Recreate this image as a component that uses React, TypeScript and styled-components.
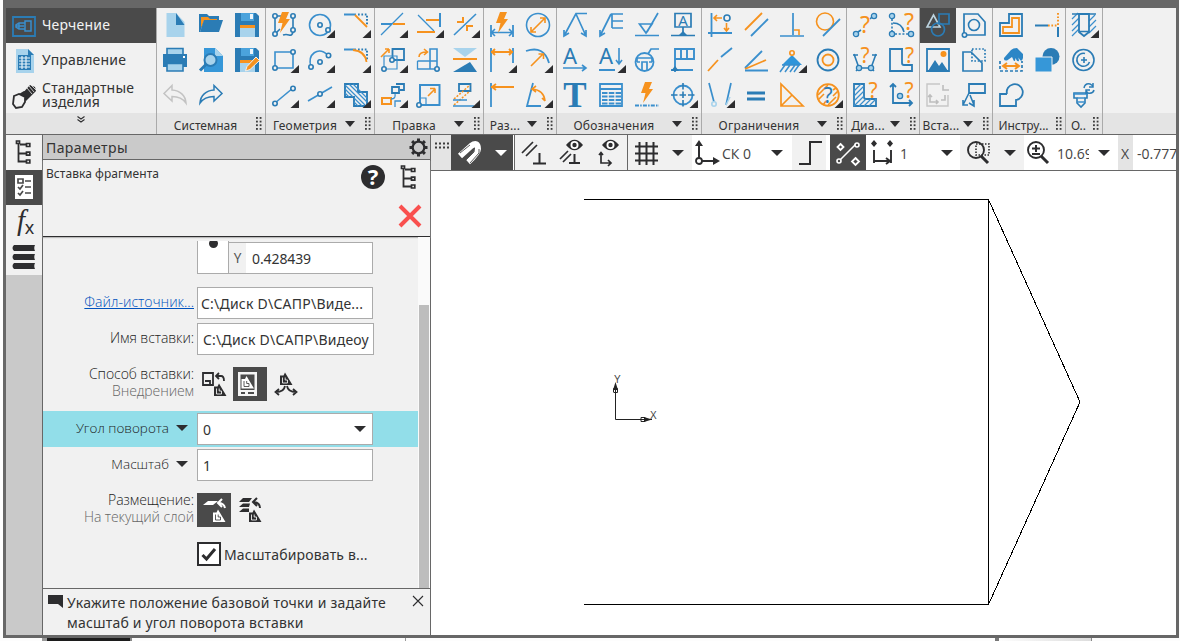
import React, { ReactNode } from "react";
import styled, { createGlobalStyle, css } from "styled-components";

const D = "#2b7cb5";
const B = "#3a8fcd";
const L = "#a8d3ec";
const O = "#f6921e";
const K = "#2d2d2f";
const frame = "#676767";
const pale = "#f1f1f1";
const dark = "#4a4a4a";

const Global = createGlobalStyle`
  * { box-sizing: border-box; }
  html, body, #root { margin: 0; padding: 0; }
  body {
    width: 1180px; height: 641px; overflow: hidden; background: #fdfdfd;
    font-family: "Noto Sans", "Open Sans", sans-serif; color: #333;
  }
`;

/* ---------- shell ---------- */
const Page = styled.div`
  width: 1180px; height: 641px; padding-left: 3px; overflow: hidden;
`;
const Window = styled.div`
  width: 1176px; height: 638px; display: flex; flex-direction: column;
  border: solid ${frame}; border-width: 8px 3px 3px 3px; background: #fff;
`;
const Behind = styled.div`
  height: 3px; display: flex; padding-left: 39px;
`;
const BehindBlock = styled.div<{ $w: number; $bg: string }>`
  width: ${(p) => p.$w}px; height: 3px; background: ${(p) => p.$bg};
`;

/* ---------- ribbon ---------- */
const Ribbon = styled.div`
  height: 127px; flex: none; display: flex; background: ${pale};
  border-bottom: 1px solid ${frame};
`;
const Modes = styled.div`
  width: 151px; display: flex; flex-direction: column; border-right: 1px solid #aaa;
`;
const Mode = styled.div<{ $active?: boolean }>`
  height: 35px; display: flex; align-items: center; gap: 6px; padding-left: 6px;
  font-size: 14px; line-height: 14px; letter-spacing: 0.2px;
  ${(p) => p.$active && css`background: ${dark}; color: #f3f3f3;`}
`;
const ModeName = styled.span`
  padding-bottom: 2px;
`;
const Footer = styled.div`
  height: 21px; display: flex; align-items: center; background: #e4e4e4;
`;
const ModesMore = styled(Footer)`
  justify-content: center; padding-bottom: 8px;
`;
const Group = styled.div<{ $cols: number }>`
  width: ${(p) => p.$cols * 36 + 1}px; flex: none; display: flex; flex-direction: column;
  border-right: 1px solid #aaa;
`;
const Cells = styled.div<{ $cols: number }>`
  display: grid; grid-template-columns: repeat(${(p) => p.$cols}, 36px); grid-auto-rows: 35px;
  height: 105px;
`;
const Cell = styled.div<{ $active?: boolean }>`
  padding: 5px 6px; background: ${(p) => (p.$active ? dark : "transparent")};
`;
const GroupName = styled.div<{ $wide: boolean }>`
  flex: 1; text-align: center; font-size: 12px; line-height: 16px; white-space: nowrap;
  overflow: hidden; padding: 4px 0 0 ${(p) => (p.$wide ? 0 : 3)}px;
  letter-spacing: ${(p) => (p.$wide ? 0.2 : 0)}px;
`;
const RibbonRest = styled.div`
  flex: 1; display: flex; flex-direction: column; justify-content: flex-end;
`;
const Glyph = styled.svg<{ $w?: number; $h?: number }>`
  width: ${(p) => p.$w ?? 24}px; height: ${(p) => p.$h ?? 24}px; display: block; flex: none;
  overflow: visible; fill: none; stroke-width: 1.6;
`;
const Caret = styled.i<{ $light?: boolean }>`
  width: 0; height: 0; flex: none;
  border: solid transparent; border-width: 6px 6px 0 6px;
  border-top-color: ${(p) => (p.$light ? "#fff" : K)};
`;
const FooterCaret = styled(Caret)`
  border-width: 6px 5.5px 0 5.5px; border-top-color: ${K}; margin: 0 5px 0 1px;
`;
const GroupDots = styled.i`
  width: 6px; height: 13px; flex: none; margin: 0 3px 0 5px;
  background-image: radial-gradient(circle at 1px 1px, #3c3c3c 1.1px, transparent 1.3px);
  background-size: 3.67px 3.67px;
`;

/* ---------- body ---------- */
const Body = styled.div`
  flex: 1; min-height: 0; display: flex;
`;
const Side = styled.div`
  width: 37px; flex: none; background: #c9c9c9; border-right: 1px solid ${frame};
`;
const SideTab = styled.div<{ $active?: boolean }>`
  height: 35px; padding: 5px 6px; background: ${(p) => (p.$active ? dark : pale)};
`;
const Panel = styled.div`
  width: 388px; flex: none; display: flex; flex-direction: column; background: ${pale};
  border-right: 1px solid ${frame};
`;
const PanelTitle = styled.div`
  height: 25px; display: flex; align-items: center; justify-content: space-between;
  padding: 0 2px 0 3px; background: #cacaca; border-bottom: 1px solid ${frame};
  font-size: 14px; letter-spacing: 0.4px;
`;
const PanelHead = styled.div`
  height: 77px; display: flex; justify-content: space-between; padding: 4px 9px 0 3px;
  font-size: 12px; border-bottom: 1px solid ${K}; box-shadow: 0 1px 1px #bbb;
  line-height: 19px; letter-spacing: 0.05px;
`;
const HeadTools = styled.div`
  display: grid; grid-template-columns: 24px 24px; gap: 15px 12px; height: 64px; padding-top: 1px;
  align-content: start;
`;
const Cross = styled.div`
  grid-column: 2;
`;
const Scroll = styled.div`
  flex: 1; min-height: 0; display: flex;
`;
const Rows = styled.div`
  flex: 1; display: flex; flex-direction: column; overflow: hidden;
`;
const Track = styled.div`
  width: 12px; background: #fafafa; padding: 68px 1px 0 1px;
`;
const Thumb = styled.div`
  height: 100%; background: #bdbdbd;
`;
const Row = styled.div<{ $h?: number; $on?: boolean }>`
  height: ${(p) => p.$h ?? 36}px; flex: none; display: flex; align-items: center; gap: 3px;
  background: ${(p) => (p.$on ? "#92dee9" : "transparent")};
`;
const Label = styled.div<{ $link?: boolean }>`
  width: 151px; flex: none; display: flex; flex-direction: column; align-items: flex-end;
  font-family: "Open Sans", "Noto Sans", sans-serif; font-weight: 300; font-size: 14px;
  line-height: 17px; color: #1c1c1c; padding-bottom: 4px; white-space: nowrap;
  letter-spacing: -0.08px;
  ${(p) => p.$link && css`color: #0052bd; text-decoration: underline; letter-spacing: 0;`}
`;
const Pick = styled.span`
  display: flex; align-items: center; gap: 7px; padding: 2px 6px 0 0; font-size: 13.5px;
  letter-spacing: 0;
`;
const Sub = styled.span`
  color: #666;
`;
const Field = styled.div<{ $w?: number; $pad?: number }>`
  width: ${(p) => p.$w ?? 176}px; height: 32px; display: flex; align-items: center;
  justify-content: space-between; padding: 0 6px 0 ${(p) => p.$pad ?? 5}px;
  background: #fff; border: 1px solid #ababab; font-size: 14px; white-space: nowrap;
  letter-spacing: 0.23px;
`;
const PointRow = styled.div`
  height: 48px; flex: none; padding: 4px 0 0 154px; display: flex; align-items: flex-start;
`;
const PointMark = styled.div`
  width: 32px; height: 33px; background: #fff; border: 1px solid #ababab; border-top: 0; overflow: hidden;
  display: flex; justify-content: center;
`;
const PointDot = styled.i`
  width: 9px; height: 9px; border-radius: 50%; background: ${K}; margin-top: -2px;
`;
const PointField = styled.div`
  width: 145px; height: 32px; margin: 1px 0 0 -1px; display: flex; border: 1px solid #ababab;
  background: #fff; font-size: 14px; line-height: 31px; letter-spacing: -0.1px;
`;
const Axis = styled.span`
  width: 17px; background: ${pale}; text-align: center; font-size: 13.5px; color: #555; margin-right: 6px;
`;
const Choices = styled.div`
  display: flex; gap: 2px;
`;
const Choice = styled.div<{ $active?: boolean }>`
  width: 34px; height: 34px; padding: 5px; background: ${(p) => (p.$active ? dark : "transparent")};
`;
const CheckRow = styled.div`
  height: 36px; padding: 0 0 2px 154px; display: flex; align-items: center; gap: 3px; font-size: 14px;
  letter-spacing: 0.17px;
`;
const Check = styled.div`
  width: 24px; height: 24px; border: 2px solid ${K}; background: #fff; padding: 2px;
`;
const Hint = styled.div`
  height: 47px; display: flex; border-top: 1px solid ${frame}; padding: 4px 6px 0 5px;
  font-size: 14px; line-height: 20px;
`;
const HintText = styled.div`
  flex: 1; padding-left: 4px; white-space: nowrap;
`;
const HintLine = styled.div<{ $track: number }>`
  letter-spacing: ${(p) => p.$track}px;
`;

const Work = styled.div`
  flex: 1; min-width: 0; display: flex; flex-direction: column;
`;
const Bar = styled.div`
  height: 36px; flex: none; display: flex; background: #fff; border-bottom: 1px solid ${frame};
  overflow: hidden;
`;
const Seg = styled.div<{ $w: number; $bg?: string; $line?: boolean; $pad?: number; $gap?: number }>`
  width: ${(p) => p.$w}px; flex: none; display: flex; align-items: center;
  padding-left: ${(p) => p.$pad ?? 0}px; gap: ${(p) => p.$gap ?? 0}px;
  background: ${(p) => p.$bg ?? "#fff"}; overflow: hidden;
  border-right: ${(p) => (p.$line ? `1px solid ${frame}` : "0")};
`;
const Value = styled.span<{ $w: number }>`
  width: ${(p) => p.$w}px; flex: none; overflow: hidden; white-space: nowrap; font-size: 14px;
  padding-top: 2px; color: #444; font-family: "Open Sans", "Noto Sans", sans-serif;
`;
const ZoomValue = styled(Value)`
  margin-right: 3px;
`;
const Drawing = styled.svg`
  width: 745px; height: 464px; display: block; background: #fff;
`;

/* ---------- icon drawings ---------- */
const Tri = () => <path d="M27 17V25H18.5Z" fill={K} />;
const Node = ({ x, y, c = D, r = 2.2 }: { x: number; y: number; c?: string; r?: number }) => (
  <circle cx={x} cy={y} r={r} fill={pale} stroke={c} />
);
const Ln = ({ d, c = B, w, dash }: { d: string; c?: string; w?: number; dash?: string }) => (
  <path d={d} stroke={c} strokeWidth={w} strokeDasharray={dash} />
);
type ChProps = { t: string; x: number; y: number; s: number; c: string; f?: string; b?: boolean; it?: boolean };
const Ch = ({ t, x, y, s, c, f = "Noto Sans", b, it }: ChProps) => (
  <text x={x} y={y} fontSize={s} fill={c} fontFamily={`"${f}", sans-serif`} fontWeight={b ? 700 : 400} fontStyle={it ? "italic" : "normal"} textAnchor="middle">{t}</text>
);
const Bolt = ({ x = 0, y = 0 }: { x?: number; y?: number }) => (
  <path transform={`translate(${x} ${y})`} d="M5 0H12L9 7H13L3 21L5.5 11H1Z" fill={O} />
);
const Floppy = () => (
  <>
    <path d="M0 0H21L24 3V24H0Z" fill={D} />
    <path d="M6 0H19V8H6Z" fill="#4ba3dc" />
    <path d="M15 1H18V6H15Z" fill="#eef6fb" />
    <path d="M5 12H20V15H5Z" fill={O} />
    <path d="M5 15H20V24H5Z" fill={L} />
  </>
);
const RedoShape = ({ c }: { c: string }) => (
  <Ln c={c} w={1.5} d="M15 2.5L23 10.5L15 18V13.5C9 13.5 4.5 15 1 20C1.5 12.5 7 7.5 15 7Z" />
);
const Tree = () => (
  <>
    <path d="M6.500 4V21.500H14M6.500 13.500H14M8 4.500H14" stroke={K} strokeWidth="1.800" />
    <path d="M4.500 1H7.500V3.500H4.500ZM14.500 3.500H17.800V6.500H14.500ZM14.500 12.200H17.800V15.200H14.500ZM14.500 20H17.800V23H14.500Z" fill={pale} stroke={K} strokeWidth="1.700" />
  </>
);
const Eye = () => (
  <>
    <path d="M0 6Q8.500 -4.500 17 6Q8.500 16.500 0 6Z" fill={K} />
    <circle cx="8.500" cy="6" r="4" fill="#fff" />
    <circle cx="8.500" cy="6" r="2.200" fill={K} />
  </>
);

const system: ReactNode[] = [
  <><path d="M3.500 0H13L21.500 9V24H3.500Z" fill={L} /><path d="M13 0L21.500 12H13Z" fill={D} /></>,
  <><path d="M0 1H8L10 3H20V8H5L1 19H0Z" fill={D} /><path d="M2 4H9L11 6H18V8H5L2 15Z" fill={O} /><path d="M5 7H24L20 19H1Z" fill={D} /></>,
  <Floppy />,
  <><path d="M4 0.500H20V7H4Z" fill={L} stroke={D} /><path d="M0 6H24V19H0Z" fill={D} /><path d="M20 8H22V10H20Z" fill="#fff" /><path d="M4 15.500H20V23H4Z" fill={L} stroke={D} /></>,
  <><path d="M5 0H16L24 8V24H5Z" fill="#3697d8" /><path d="M16 0V8H24Z" fill={L} /><circle cx="11.500" cy="12" r="6" fill={L} stroke={D} strokeWidth="2" /><path d="M7 16.500L1 22.500" stroke={D} strokeWidth="3" /></>,
  <><Floppy /><path d="M21 9L24.500 12.500L15 21.500L10.500 23L12 18.500Z" fill={O} stroke={pale} strokeWidth="1" /></>,
  <g transform="translate(24 0) scale(-1 1)"><RedoShape c="#c3c3c3" /></g>,
  <RedoShape c={D} />,
];

const geometry: ReactNode[] = [
  <><Ln c={D} d="M3 3V21M21 4V19Q20 23 17 22T11 22" /><Ln c={D} d="M3 3H9M3 21L8 16" /><Node x={3} y={3} /><Node x={3} y={21} /><Node x={21} y={3} /><Node x={21} y={17} /><Bolt x={5} y={-1} /></>,
  <><circle cx="12" cy="12" r="10.500" stroke={B} /><Node x={12} y={12} /><Node x={20} y={17} /><Tri /></>,
  <><Ln w={2} d="M0 1.500H12" /><Ln c={D} w={2} dash="1.700 1.700" d="M14 1.500H23V13" /><Ln c={O} w={1.800} d="M11 2L23 14" /><Tri /></>,
  <><Ln d="M3 4H21V20H3Z" /><Node x={21} y={4} /><Node x={3} y={20} /><Tri /></>,
  <><Ln d="M3 19C-1 6 10 -2 20 7" /><Node x={12} y={14} /><Node x={3} y={19} /><Node x={20.500} y={7.500} /><Tri /></>,
  <><Ln w={2} d="M0 1.500H12" /><Ln c={D} w={2} dash="1.700 1.700" d="M14 1.500H23V13" /><Ln c={O} w={1.800} d="M9 2Q21 3 22.500 14" /><Tri /></>,
  <><Ln d="M3 20L21 5" /><Node x={3} y={20.500} /><Node x={21} y={5.500} /><Tri /></>,
  <><Ln d="M0 18L24 4" /><Node x={12} y={11} /><Tri /></>,
  <><Ln c={D} d="M1 1H14V9H23V23H10V14H1Z" w={1.900} /><Ln w={1.200} d="M1 2L22 23M1 6L9 14M5 1L23 19M9 1L23 15M1 10L5 14M10 19L14 23M10 15L18 23" /><Tri /></>,
];

const edit: ReactNode[] = [
  <><Ln w={1.300} d="M0 22L22 0" /><Ln w={2} d="M0 11H11" /><Ln c={O} w={2} d="M12 11H24" /><Tri /></>,
  <><Ln w={1.300} d="M1 2L17 18" /><Ln w={2} d="M23 0V14" /><Ln c={O} w={2} d="M9 7H22M0 19H18" /><Tri /></>,
  <><Ln d="M1 22L23 1" /><Ln c={O} w={2} d="M4 9H10V4M14 18V13H20" /><Tri /></>,
  <><Ln c={D} w={1.800} d="M11.500 1H23V12H11.500Z" /><Ln d="M3 21V8H16V21Z" w={1.200} /><Node x={11} y={12} /><Node x={3} y={21} /><Ln c={O} d="M0 9L8 1M8 1H4M8 1V5" /><Tri /></>,
  <><Ln d="M13 21V1H20V21" /><Ln w={1.300} d="M0.500 13H20M0.500 13V21H18" /><Node x={20} y={21} /><Ln c={O} d="M2 9Q2 4 10 4M7 1L10.500 4L7 7" /></>,
  <><path d="M0 0H24L12 9Z" fill={L} /><path d="M0 24H24L17 14Z" fill={D} /><Ln c={O} w={2} d="M0 11H24" /></>,
  <><Ln c={D} d="M15 1H23V7H19M11 4H18V10H11Z" w={1.800} /><Ln c={O} w={2} d="M1 15H10V21H1Z" /><Ln w={1.300} d="M10 16Q15 16 14 11M14 24V18H20" /><Tri /></>,
  <><Ln w={2} d="M3 2H22.500V22H3Z" /><Ln w={1.200} d="M3 15H9V22" /><Node x={2} y={22} /><Ln c={O} d="M11 13L18 6M18 5.500H13M18 5.500V10" /></>,
  <><Ln c={D} d="M6 1H17.500V8H6Z" w={1.800} /><Ln c={O} w={1.500} dash="2 1.500" d="M1 16L17 2M1 22L17 8" /><Ln w={1.400} d="M0 17H14M0 23H21" /><Tri /></>,
];

const dims: ReactNode[] = [
  <><Ln w={1.800} d="M1 12V24M23 12V24" /><Ln d="M1 19.500H23M5 16L1.500 19.500L5 23M19 16L22.500 19.500L19 23" /><Bolt x={5} y={-1} /></>,
  <><circle cx="12" cy="12" r="11.500" stroke={B} /><Ln c={O} d="M5 19L19 5M5 14V19H10M14 5H19V10" /></>,
  <><Ln w={1.800} d="M1 0V24M23 0V15" /><Ln c={O} w={1.800} d="M1 4H23M5 1L2 4L5 7M19 1L22 4L19 7" /><Tri /></>,
  <><Ln w={1.800} d="M0 3Q18 -3 23 15" /><Ln c={O} d="M5 18L17 6M12.500 6H17.500V11" /><Tri /></>,
  <><Ln w={1.800} d="M1 0V24" /><Ln c={O} w={1.800} d="M1 4H24M6 1L2 4L6 7" /></>,
  <><Ln w={1.800} d="M7 0L1 23H15" /><Ln c={O} d="M6 6Q18 7 19 18M10 3L6 6L10 9M16 15L19 18" /><Tri /></>,
];

const marks: ReactNode[] = [
  <><Ln w={1.700} d="M24 0.500H13L1 23M1 17V23L6 20M13 1L23 23M23 17V23L18 20" /></>,
  <><Ln w={1.700} d="M12 1H24M12 1L1 23M1 17V23L6 20M13 1V15M13 8H24M13 15H24" /></>,
  <><Ln w={1.700} d="M4.500 11H17L11 20ZM12 19L23 0M0 22.500H24" /></>,
  <><Ln w={1.700} c={D} d="M4 0.500H20V14H4ZM12 14V19M0 22.500H24" /><path d="M7 23L12 18L17 23Z" fill={D} /><Ch t="A" x={12} y={12.500} s={15} c={D} /></>,
  <><Ch t="A" x={7} y={15.500} s={22} c={D} /><Ln d="M0 20H23M19 17L23 20L19 23" /></>,
  <><Ch t="A" x={7} y={15.500} s={22} c={D} /><Ln d="M20 0V16M17 12L20 16L23 12" /><Ln w={2} d="M0 22H16" /><Tri /></>,
  <><circle cx="9.500" cy="14" r="9" stroke={B} strokeWidth="1.800" /><Ln w={1.700} d="M2 14V10H17V14M7 22V14H12V22M2 14H5M14 14H17M13 6L16 1H24" /></>,
  <><Ln w={1.900} d="M4 24V1H23V11H4M10 1V11M16 1V11M0 22H22" /><path d="M0 23L4 18L8 23Z" fill={D} /></>,
  <Ch t="T" x={12} y={23.500} s={35} c={D} f="Liberation Serif" b />,
  <><Ln w={1.800} d="M1 1H23V23H1ZM1 6H23" /><Ln w={1.800} dash="5.500 1.300" d="M3 10H22M3 13.500H22M3 17H22M3 20.500H22" /></>,
  <><Bolt x={5} y={-1} /><Ln dash="4 1.200 1.500 1.200" d="M0 22.500H24" w={1.900} /></>,
  <><circle cx="12" cy="12" r="9.500" stroke={B} strokeWidth="1.800" /><Ln c={D} dash="6.500 2" d="M0 12H24M12 0V24" /><Tri /></>,
];

const limits: ReactNode[] = [
  <><Ln w={1.800} d="M3.500 0V24M0 20H24" /><Node x={19} y={5} r={3} /><Ln c={O} d="M14 5H6M9 2L6 5L9 8M18.500 10V18M16 15L18.500 18L21 15" /></>,
  <><Ln c={O} w={1.800} d="M1 17L18 0" /><Ln w={1.800} d="M7 23L24 6" /></>,
  <><Ln w={1.700} d="M13 0V22M0 23H24" /><Ln c={O} d="M14 17H19V22" /></>,
  <><circle cx="9" cy="8.500" r="8.500" stroke={O} /><Ln w={1.800} d="M7 23L24 6" /></>,
  <><Ln c={O} w={1.800} d="M0 23L10 12" /><Ln w={1.800} d="M13 9L24 0" /></>,
  <><Ln w={1.800} d="M1 20L18 3" /><Ln c={O} w={1.800} d="M1 21L22 12" /><Ln c={B} w={2} d="M1 22.500H24" /></>,
  <><path d="M12 7L22 17H2Z" fill="#2f95da" /><circle cx="12" cy="5" r="2.200" stroke={O} fill={pale} /><Ln w={1.500} d="M0 24L5 17M5 24L10 17M10 24L15 17M14 24L19 17M2 17H20" /><Tri /></>,
  <><circle cx="12" cy="12" r="10.500" stroke={D} strokeWidth="1.800" /><circle cx="12" cy="12" r="5.500" stroke={O} strokeWidth="1.800" /></>,
  <><Ln w={1.700} d="M1 0L6 19M23 0L18 22" /><Node x={6} y={21} c={L} /><Ln c={L} d="M18 22L22 14" /><Tri /></>,
  <Ln c={D} w={3} d="M3 10H21M3 16H21" />,
  <Ln c={O} w={1.700} d="M1 1V23H23ZM1 23L12 12" />,
  <><circle cx="12" cy="12" r="10.800" stroke={O} strokeWidth="1.800" /><Ln c={O} d="M2 12L12 2M2 17L8 11M7 22L10 18M17 7L20 5M17 13L22 8M12 22L20 14" /><Ch t="?" x={12} y={19.500} s={21} c={D} /><Tri /></>,
];

const Ball = ({ x, y }: { x: number; y: number }) => <circle cx={x} cy={y} r="2.600" fill={L} stroke={D} strokeWidth="1.300" />;
const diag: ReactNode[] = [
  <><Ball x={3} y={21} /><Ball x={21} y={3} /><Ln c={D} d="M5 19L8 17M17 6L19 4" /><Ch t="?" x={12} y={20} s={23} c={O} /></>,
  <><Ball x={3} y={3} /><Ball x={3} y={21} /><Ball x={22} y={21} /><Ln c={D} dash="2 1.700" d="M3 6V18M6 21H19" /><Ln c={D} d="M4 10Q13 10 15 19" /><Ch t="?" x={20} y={16.500} s={23} c={O} /></>,
  <><Ln c={D} d="M1 6L6 20H18L23 6M0 7H5M19 7H24M3 23L7 19M21 23L17 19" /><Ball x={6} y={20} /><Ball x={18} y={20} /><Ch t="?" x={12} y={15} s={21} c={O} /></>,
  <><Ln c={D} w={1.800} d="M14 1H1V23H23V17H15Q13 17 13 15V1" /><Ch t="?" x={20.500} y={14.500} s={21} c={O} /></>,
  <><Ln c={D} w={1.800} d="M1 1H11V14Q11 16 13 16H23V23H1Z" /><Ln w={1.200} d="M1 8L8 1M1 13L11 3M1 18L11 8M1 23L11 13M6 23L13 16M11 23L18 16M16 23L23 16" /><Ch t="?" x={20} y={14.500} s={21} c={O} /></>,
  <><Ln c={D} w={1.800} d="M4 1V20H23M1 4L4 1L7 4M20 17L23 20L20 23" /><Ball x={11} y={13} /><Ch t="?" x={20} y={14.500} s={21} c={O} /></>,
];

const insert: ReactNode[] = [
  <><Ln c="#bcd3df" w={1.600} d="M7.500 2L14 14H1Z" /><Ln c={D} w={1.700} d="M13 1H23V11H13Z" /><circle cx="12" cy="16.500" r="6.500" stroke={D} strokeWidth="1.700" /></>,
  <><Ln c={D} w={1.700} d="M2 22V1H16L23 9V22H5" /><circle cx="12" cy="12" r="5.500" stroke={D} /><Node x={2.500} y={22} /></>,
  <><Ln c={D} w={1.800} d="M1 1H23V23H1Z" /><path d="M2 23L9 12L13 18L16 14L22 23Z" fill={D} /><circle cx="17.500" cy="6" r="3" fill={O} /></>,
  <><Ln c={D} w={1.700} d="M9 4H1V23H20V15L9 4" /><Ln c={D} w={1.700} dash="1.700 1.700" d="M10 1H23V13H10Z" /></>,
  <><Ln c="#c6c6c6" w={1.400} d="M14 1H1V23H22V12" /><Ln c="#bdbdbd" d="M4 12V19H12M2 14L4 12L6 14M10 17L12 19L10 21M19 12V17H15M17 2V7H23" /></>,
  <><Ln c={D} w={1.800} d="M7 1H23V10H7Z" /><Ln c={D} d="M7 10L1 22M1 17V22H6M8 12L12 22M7 20L12 23V17" /></>,
];

const tools: ReactNode[] = [
  <><Ln c={D} w={1.800} d="M10 1H23V23H1V10H10Z" /><Ln c={O} w={1.800} d="M13 5H20V20H4V14H13Z" /></>,
  <><Ln c={D} w={2} d="M0 12.500H13" /><Ln c={O} w={1.900} dash="1.700 1.700" d="M13 12.500H23M23 0V12" /><Ln c={D} w={2} d="M23 14V24" /></>,
  <><path d="M5 10L12 2Q14 0 18 0L24 6V10Q23 14 21 12L19.500 9.500L20 13Q18.500 14 17.500 12L16.500 10L16 13Q14.500 13.500 14 11L13 9L8 12.500Q4.500 13 5 10Z" fill="#2c86c6" /><Ln c={O} w={2} d="M4 18H20M8 15L4 18L8 21M16 15L20 18L16 21" /><Ln c={D} w={1.700} dash="3 2" d="M1 13V23H23V13" /></>,
  <><circle cx="16" cy="8.500" r="8.500" fill={D} /><path d="M0 9H17V24H0Z" fill="#3697d8" stroke={pale} strokeWidth="1" /></>,
  <><Ln c={D} w={1.800} d="M8 11H1V23H17V17A8 8 0 1 0 8 11" /></>,
];

const holes: ReactNode[] = [
  <><Ln w={1.200} d="M0 6L6 0M0 12L7 5M0 18L7 11M0 23L7 16M17 8L23 2M17 14L24 7M17 20L24 13" /><path d="M7 1H17V19L12 23L7 19Z" fill={pale} stroke={D} strokeWidth="1.800" /><Ln c={D} d="M7 18.500H17M0 1H24" /><Tri /></>,
  <><circle cx="11.500" cy="12" r="10.500" stroke={D} /><path d="M13 5.500A6.500 6.500 0 1 0 17.500 14" stroke={D} /><Ln c={D} d="M12 9V15M9 12H15" /></>,
  <><path d="M2 10H15V15H13V20L9 24L5 20V15H2Z" stroke={D} /><Ln c={B} d="M1 11H16M5 15H13M5 19H13" /><Ln c={D} d="M12 5Q13 0 18 1L21 3M21 0V4H17M22 7Q21 11 16 10L14 8M14 11V7H18" w={1.500} /></>,
];

const groups = [
  { name: "Системная", cols: 3, caret: false, icons: system },
  { name: "Геометрия", cols: 3, caret: true, icons: geometry },
  { name: "Правка", cols: 3, caret: true, icons: edit },
  { name: "Раз...", cols: 2, caret: true, icons: dims },
  { name: "Обозначения", cols: 4, caret: true, icons: marks },
  { name: "Ограничения", cols: 4, caret: true, icons: limits },
  { name: "Диа...", cols: 2, caret: true, icons: diag },
  { name: "Вста...", cols: 2, caret: true, icons: insert, active: 0 },
  { name: "Инстру...", cols: 2, caret: false, icons: tools },
  { name: "О..", cols: 1, caret: false, icons: holes },
];

/* A small assembly figure used by the insertion mode buttons */
const Part = ({ c, bg }: { c: string; bg: string }) => (
  <><path d="M0 3H3.500L5 0L12.500 12.500H0Z" fill={c} /><path d="M2.500 5V10.500H7.500V7.500H5.200V5" stroke={bg} strokeWidth="0.900" /></>
);

const Icon = ({ children, w, h }: { children: ReactNode; w?: number; h?: number }) => (
  <Glyph $w={w} $h={h} viewBox={`0 0 ${w ?? 24} ${h ?? 24}`}>{children}</Glyph>
);

function RibbonBar() {
  return (
    <Ribbon>
      <Modes>
        <Mode $active>
          <Icon><Ln c={D} w={1.800} d="M1 3H23V22H1Z" /><Ln c={B} w={1.500} d="M13 7H19V17H13ZM13 9H7L4 11V13L7 15H13M7 9V15M4 12H12" /></Icon>
          <ModeName>Черчение</ModeName>
        </Mode>
        <Mode>
          <Icon><path d="M4 0H16L22 6V24H4Z" fill={L} /><path d="M16 0V6H22Z" fill={D} /><path d="M6 6H19V21H6Z" fill={D} /><Ln c="#e6f3fa" w={1.200} d="M7 9H18M7 12H18M7 15H18M7 18H18M10 7V20M14 7V20" /></Icon>
          <ModeName>Управление</ModeName>
        </Mode>
        <Mode>
          <Icon>
            <path d="M9 11L18 1L23 3L24 7L14 17Z" fill={K} />
            <Ln c={pale} w={0.800} d="M15 4L20 10M17 2L22 8M19 1L24 6" />
            <path d="M2 12L7 10L13 13V18L10 23L4 24L1 20Z" fill={pale} stroke={K} strokeWidth="1.800" />
            <path d="M7 10L13 13L16 12V8L12 7Z" fill={K} />
          </Icon>
          <ModeName>Стандартные<br />изделия</ModeName>
        </Mode>
        <ModesMore>
          <Icon w={8} h={7}><Ln c={K} w={1.100} d="M0.500 0.500L4 3L7.500 0.500M0.500 3.500L4 6L7.500 3.500" /></Icon>
        </ModesMore>
      </Modes>
      {groups.map((g) => (
        <Group key={g.name} $cols={g.cols}>
          <Cells $cols={g.cols}>
            {g.icons.map((icon, i) => (
              <Cell key={i} $active={g.active === i}><Icon>{icon}</Icon></Cell>
            ))}
          </Cells>
          <Footer>
            <GroupName $wide={g.caret}>{g.name}</GroupName>
            {g.caret && <FooterCaret />}
            <GroupDots />
          </Footer>
        </Group>
      ))}
      <RibbonRest><Footer /></RibbonRest>
    </Ribbon>
  );
}

function ParametersPanel() {
  return (
    <Panel>
      <PanelTitle>
        Параметры
        <Icon w={19} h={19}>
          <circle cx="9.500" cy="9.500" r="5.800" stroke={K} strokeWidth="2.200" />
          <Ln c={K} w={3} d="M9.500 0.500V3.500M9.500 15.500V18.500M0.500 9.500H3.500M15.500 9.500H18.500M3.100 3.100L5.200 5.200M13.800 13.800L15.900 15.900M3.100 15.900L5.200 13.800M13.800 5.200L15.900 3.100" />
        </Icon>
      </PanelTitle>
      <PanelHead>
        Вставка фрагмента
        <HeadTools>
          <Icon><circle cx="12" cy="12" r="12" fill={K} /><Ch t="?" x={12} y={20} s={22} c="#fff" b /></Icon>
          <Icon><Tree /></Icon>
          <Cross><Icon><Ln c="#f9504f" w={4} d="M3 2L23 22M23 2L3 22" /></Icon></Cross>
        </HeadTools>
      </PanelHead>
      <Scroll>
        <Rows>
          <PointRow>
            <PointMark><PointDot /></PointMark>
            <PointField><Axis>Y</Axis>0.428439</PointField>
          </PointRow>
          <Row><Label $link>Файл-источник...</Label><Field $pad={3}>C:\Диск D\САПР\Виде...</Field></Row>
          <Row><Label>Имя вставки:</Label><Field $w={177}>C:\Диск D\САПР\Видеоу</Field></Row>
          <Row $h={54}>
            <Label>Способ вставки:<Sub>Внедрением</Sub></Label>
            <Choices>
              <Choice><Icon>
                <Ln c={K} w={1.800} d="M1 1H11V13H1ZM3 9H8V13" />
                <Ln c={K} w={1.800} d="M14 4H19Q22 4 22 9M17 1L14 4L17 7" />
                <g transform="translate(12 11.500)"><Part c={K} bg={pale} /></g>
              </Icon></Choice>
              <Choice $active><Icon>
                <path d="M0 0H19V24H0Z" fill="#f4f4f4" /><path d="M2.500 2.500H16.500V18H2.500Z" fill={dark} />
                <g transform="translate(3.500 4)"><Part c="#fff" bg={dark} /></g><Ln c={dark} w={2} d="M3 21H7M10 21H16" />
              </Icon></Choice>
              <Choice><Icon>
                <g transform="translate(6 0.500)"><Part c={K} bg={pale} /></g>
                <Ln c={K} w={1.800} d="M11 14Q10 20 2 20M5 17L1.500 20L5 23M13 14Q14 20 22 20M19 17L22.500 20L19 23" />
              </Icon></Choice>
            </Choices>
          </Row>
          <Row $on><Label><Pick>Угол поворота<Caret /></Pick></Label><Field>0<Caret /></Field></Row>
          <Row><Label><Pick>Масштаб<Caret /></Pick></Label><Field>1</Field></Row>
          <Row $h={54}>
            <Label>Размещение:<Sub>На текущий слой</Sub></Label>
            <Choices>
              <Choice $active><Icon>
                <path d="M1 7L6 3H16L11 7Z" fill="#fff" /><Ln c="#fff" w={2} d="M16 5Q22 5 23 10M20 1L16 5L20 9" />
                <g transform="translate(11 11.500)"><Part c="#fff" bg={dark} /></g>
              </Icon></Choice>
              <Choice><Icon>
                <path d="M1 4L5 0H14L11 4ZM1 9L5 5.500H12L11 9ZM1 14L5 10.500H11V14Z" fill={K} /><Ln c={K} w={2} d="M16 4Q22 5 22 10M19 0L15 4L19 8" />
                <g transform="translate(11 11.500)"><Part c={K} bg={pale} /></g>
              </Icon></Choice>
            </Choices>
          </Row>
          <CheckRow>
            <Check><Icon w={16} h={16}><Ln c={K} w={3} d="M1.500 9L5.500 13L14 3" /></Icon></Check>
            Масштабировать в...
          </CheckRow>
        </Rows>
        <Track><Thumb /></Track>
      </Scroll>
      <Hint>
        <Icon w={15} h={15}><path d="M0 2H15V15L10 11H0Z" fill={K} /></Icon>
        <HintText>
          <HintLine $track={0.26}>Укажите положение базовой точки и задайте</HintLine>
          <HintLine $track={0.19}>масштаб и угол поворота вставки</HintLine>
        </HintText>
        <Icon w={12} h={14}><Ln c={K} w={1.100} d="M1 3L11 13M11 3L1 13" /></Icon>
      </Hint>
    </Panel>
  );
}

function ViewBar() {
  return (
    <Bar>
      <Seg $w={20} $bg="#e4e4e4" $pad={3}><Icon w={14} h={24}><Ln c="#3c3c3c" w={2} dash="2 2" d="M1 2.500H15M1 6.500H15" /></Icon></Seg>
      <Seg $w={62} $bg={dark} $pad={6} $gap={14}>
        <Icon>
          <Ln c="#fff" w={6} d="M3 15L14 5Q21 0 21 8Q21 12 11 21" />
          <Ln c={dark} w={0.900} d="M6 18L15 10Q18 8 17 11L9 19M22 8L22 12L13 22M3 12L13 4" />
        </Icon>
        <Caret $light />
      </Seg>
      <Seg $w={2} $line />
      <Seg $w={113} $bg={pale} $line $pad={7} $gap={14}>
        <Icon><Ln c={K} w={1.700} d="M0 12L11 1M4 15L15 4" /><Ln c={K} w={2} d="M11 22.500H24M17.500 12V22" /></Icon>
        <Icon><Ln c={K} w={1.700} d="M0 18L8 10M3 21L11 13" /><Ln c={K} w={2} d="M9 22H20M14.500 13V22" /><g transform="translate(6 -2)"><Eye /></g></Icon>
        <Icon><g transform="translate(4 -2)"><Eye /></g><Ln c={K} w={1.700} d="M3 12V22H13M1 14L3 11.500L5 14M10 19L13 22L10 25" /></Icon>
      </Seg>
      <Seg $w={64} $bg={pale} $pad={7} $gap={13}>
        <Icon><Ln c={K} w={2} d="M0 5.500H23M0 12.500H23M0 19.500H23M4.500 1V24M11.500 1V24M18.500 1V24" /></Icon>
        <Caret />
      </Seg>
      <Seg $w={100} $pad={3} $gap={3}>
        <Icon><Ln c={K} w={2} d="M4 19V2M7 20H22" /><path d="M0 5L4 -1L8 5ZM18 16L25 20L18 24Z" fill={K} /><circle cx="4" cy="20" r="3" stroke={K} strokeWidth="1.800" fill="#fff" /></Icon>
        <Value $w={46}>СК 0</Value>
        <Caret />
      </Seg>
      <Seg $w={34} $bg={pale} $pad={7}><Icon><Ln c={K} w={2} d="M0 23H11V1H23" /></Icon></Seg>
      <Seg $w={4} />
      <Seg $w={36} $bg={dark} $pad={6}>
        <Icon>
          <Ln c="#fff" w={1.600} d="M3 20L20 3" />
          <circle cx="3" cy="20" r="2" stroke="#fff" fill={dark} /><circle cx="21" cy="4" r="2" stroke="#fff" fill={dark} />
          <Ln c="#fff" w={1.800} d="M4.500 3L7.500 6L4.500 9L1.500 6ZM19.500 17L23 20.500L19.500 24L16 20.500Z" />
        </Icon>
      </Seg>
      <Seg $w={94} $pad={4} $gap={6}>
        <Icon><Ln c={K} w={1.900} d="M4 9V22M21 9V22M4 20H20M16 17L20 20L16 23" /><path d="M4 -1L7 2.500L4 6L1 2.500ZM20 -1L23 2.500L20 6L17 2.500Z" fill={K} /></Icon>
        <Value $w={35}>1</Value>
        <Caret />
      </Seg>
      <Seg $w={64} $bg={pale} $pad={7} $gap={13}>
        <Icon><circle cx="9" cy="9" r="8" stroke={K} strokeWidth="1.900" /><Ln c={K} w={3} d="M14 15L21 22" /><Ln c={K} w={1.600} dash="1.500 1.500" d="M9 3H22V14H9Z" /></Icon>
        <Caret />
      </Seg>
      <Seg $w={94} $pad={3} $gap={6}>
        <Icon><circle cx="9" cy="9" r="8" stroke={K} strokeWidth="1.900" /><Ln c={K} w={3} d="M14 15L21 22" /><Ln c={K} w={2} d="M5 7.500H13M9 4V11M5 13H13" /></Icon>
        <ZoomValue $w={32}>10.69</ZoomValue>
        <Caret />
      </Seg>
      <Seg $w={15} $bg="#e4e4e4" $pad={3}><Value $w={12}>X</Value></Seg>
      <Seg $w={43} $pad={4}><Value $w={42}>-0.777</Value></Seg>
    </Bar>
  );
}

function Model() {
  return (
    <Drawing viewBox="431 171 745 464" fill="none" stroke="#000" strokeWidth="1">
      <path shapeRendering="crispEdges" d="M584 199.500H988.500V604.500H584" />
      <path shapeRendering="crispEdges" d="M988.500 199.500L1080 402L988.500 604.500" />
      <g stroke="#222">
        <path d="M615.500 384V419.500H652" />
        <path d="M613.500 392V388.500H617.500V392.500H613.500M641 417.500H645V421.500H641Z" />
      </g>
      <path d="M613 390L615.500 382L618 390ZM644 417L652 419.500L644 422Z" fill="#222" stroke="none" />
      <g fill="#444" stroke="none" fontFamily="Liberation Sans, sans-serif" fontSize="10">
        <text x="614" y="383">Y</text>
        <text x="650" y="419">X</text>
      </g>
    </Drawing>
  );
}

export default function App() {
  return (
    <Page>
      <Global />
      <Window>
        <RibbonBar />
        <Body>
          <Side>
            <SideTab><Icon><Tree /></Icon></SideTab>
            <SideTab $active>
              <Icon><path d="M3 0H21V24H3Z" fill="#fff" /><Ln c={dark} w={1.700} d="M6 4H11V8H6ZM13 6H19M13 12H19M13 18H19M6 12L8 14L11 10M6 18L8 20L11 16" /></Icon>
            </SideTab>
            <SideTab>
              <Icon><Ch t="f" x={9} y={19.500} s={29} c={K} f="Liberation Serif" it /><Ch t="x" x={17.500} y={23.500} s={18} c={K} /></Icon>
            </SideTab>
            <SideTab>
              <Icon><path d="M2 0H23Q21.500 3 23 6H2Q-1 3 2 0ZM2 9H23Q21.500 12 23 15H2Q-1 12 2 9ZM2 18H23Q21.500 21 23 24H2Q-1 21 2 18Z" fill={K} /></Icon>
            </SideTab>
          </Side>
          <ParametersPanel />
          <Work>
            <ViewBar />
            <Model />
          </Work>
        </Body>
      </Window>
      <Behind>
        <BehindBlock $w={5} $bg="#999" />
        <BehindBlock $w={83} $bg="#1c1c1c" />
        <BehindBlock $w={2} $bg="#888" />
        <BehindBlock $w={273} $bg="#fdfdfd" />
        <BehindBlock $w={1} $bg="#999" />
        <BehindBlock $w={589} $bg="#fdfdfd" />
        <BehindBlock $w={4} $bg="#777" />
        <BehindBlock $w={92} $bg="linear-gradient(90deg, #fdfdfd, #ddd)" />
        <BehindBlock $w={1} $bg="#888" />
      </Behind>
    </Page>
  );
}
